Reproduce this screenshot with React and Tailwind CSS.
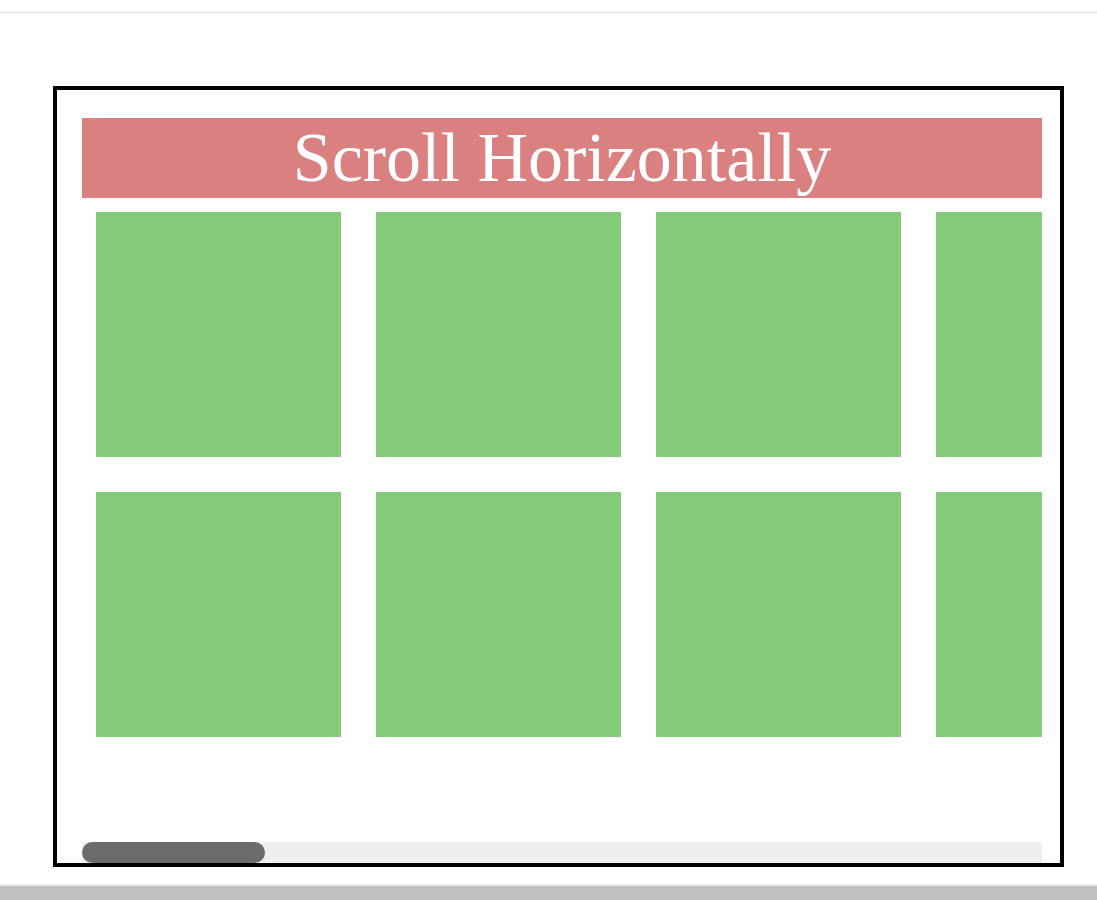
import React from 'react';

const rows = [0, 1];
const cols = [0, 1, 2, 3];

export default function App() {
    return (
        <div className="h-[900px] w-full bg-white flex flex-col overflow-hidden">
            {/* top rule */}
            <div className="h-[13px] shrink-0 border-b border-[#dddddd]" />

            <div className="flex-1 pt-[73px] pl-[53px]">
                <div className="w-[1011px] h-[781px] border-4 border-black pl-[25px] pt-[28px] pr-[18px] flex flex-col">
                    <div className="h-[80px] shrink-0 bg-[#db8080] text-white text-center font-['Liberation_Serif',serif] text-[70px] leading-[80px] whitespace-nowrap">
                        Scroll Horizontally
                    </div>

                    {/* tiles, clipped on the right */}
                    <div className="flex-1 overflow-hidden pl-[14px] pt-[14px] flex flex-col gap-[35px]">
                        {rows.map(r => (
                            <div key={r} className="flex gap-[35px]">
                                {cols.map(c => (
                                    <div key={c} className="w-[245px] h-[245px] shrink-0 bg-[#84cb7a]" />
                                ))}
                            </div>
                        ))}
                    </div>

                    {/* scrollbar */}
                    <div className="h-[21px] shrink-0 bg-[#efefef] flex items-stretch">
                        <div className="w-[183px] rounded-full bg-[#6b6b6b]" />
                    </div>
                </div>
            </div>

            {/* page scrollbar */}
            <div className="h-[16px] shrink-0 border-t-2 border-[#ececec] bg-[#c1c1c1]" />
        </div>
    );
}
